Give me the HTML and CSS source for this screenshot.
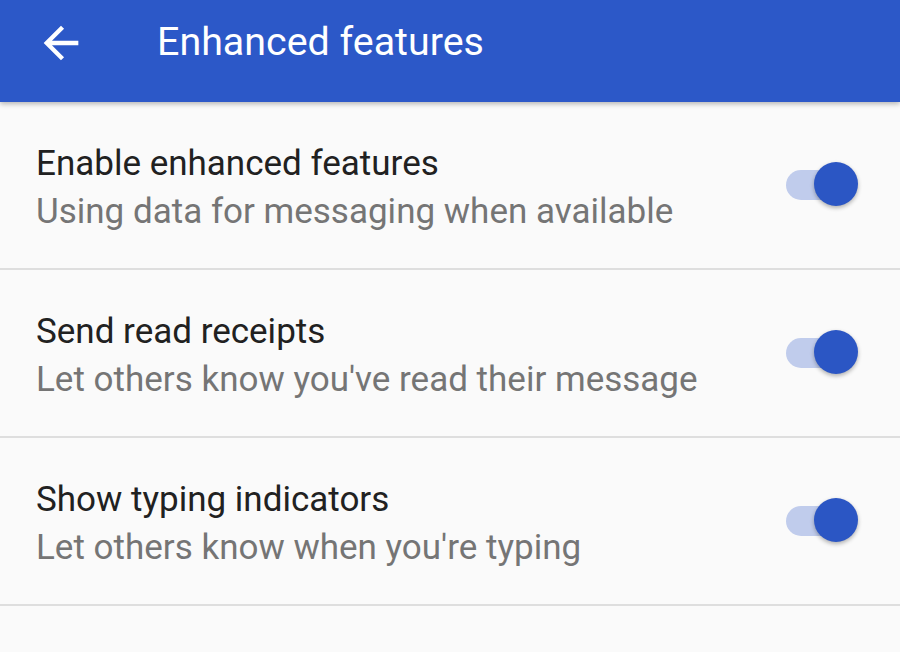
FILE: index.html
```html
<!DOCTYPE html>
<html>
<head>
<meta charset="utf-8">
<link rel="stylesheet" href="styles.css">
</head>
<body>
<header class="appbar">
  <svg class="back" width="52" height="52" viewBox="0 0 24 24"><path d="M20 11H7.83l5.59-5.59L12 4l-8 8 8 8 1.41-1.41L7.83 13H20v-2z" fill="#fff"/></svg>
  <h1 class="title">Enhanced features</h1>
</header>
<main class="list">
  <div class="row">
    <div class="text">
      <div class="primary">Enable enhanced features</div>
      <div class="secondary">Using data for messaging when available</div>
    </div>
    <div class="switch"><div class="track"></div><div class="thumb"></div></div>
  </div>
  <div class="row">
    <div class="text">
      <div class="primary">Send read receipts</div>
      <div class="secondary">Let others know you've read their message</div>
    </div>
    <div class="switch"><div class="track"></div><div class="thumb"></div></div>
  </div>
  <div class="row">
    <div class="text">
      <div class="primary">Show typing indicators</div>
      <div class="secondary">Let others know when you're typing</div>
    </div>
    <div class="switch"><div class="track"></div><div class="thumb"></div></div>
  </div>
</main>
</body>
</html>
```
FILE: styles.css
```css
html, body {
  margin: 0;
  padding: 0;
  background: #fafafa;
  font-family: Roboto, "Liberation Sans", sans-serif;
}
.appbar {
  height: 102px;
  background: #2c58c8;
  display: flex;
  align-items: center;
  box-shadow: 0 2px 5px rgba(0,0,0,0.28);
  position: relative;
  z-index: 1;
}
.back {
  margin-left: 35px;
  margin-top: -16px;
}
.title {
  margin: -18px 0 0 70px;
  font-weight: 400;
  font-size: 39.4px;
  line-height: 46px;
  color: #fff;
}
.row {
  height: 166px;
  border-bottom: 2px solid #dedede;
  display: flex;
  align-items: center;
  padding: 0 42px 0 36px;
}
.text {
  flex: 1;
  margin-top: 2px;
}
.primary {
  font-size: 35px;
  color: #212121;
  line-height: 52px;
}
.secondary {
  font-size: 35px;
  color: #757575;
  line-height: 44px;
}
.switch {
  position: relative;
  width: 74px;
  height: 46px;
}
.track {
  position: absolute;
  left: 2px;
  top: 8px;
  width: 58px;
  height: 30px;
  border-radius: 15px;
  background: #c0ccec;
}
.thumb {
  position: absolute;
  right: 0;
  top: 0;
  width: 44px;
  height: 44px;
  border-radius: 50%;
  background: #2b56c4;
  box-shadow: 0 2px 4px rgba(0,0,0,0.3);
}
```
